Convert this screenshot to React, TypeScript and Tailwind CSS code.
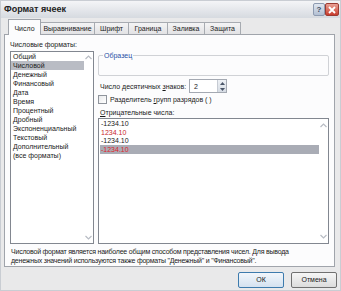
import React from "react";

const formats = [
  "Общий",
  "Числовой",
  "Денежный",
  "Финансовый",
  "Дата",
  "Время",
  "Процентный",
  "Дробный",
  "Экспоненциальный",
  "Текстовый",
  "Дополнительный",
  "(все форматы)",
];

const tabs = [
  { t: "Выравнивание", w: "w-[54px]" },
  { t: "Шрифт", w: "w-[34px]" },
  { t: "Граница", w: "w-[39px]" },
  { t: "Заливка", w: "w-[37px]" },
  { t: "Защита", w: "w-[36px]" },
];

function UpArrow() {
  return (
    <svg width="7" height="5" viewBox="0 0 7 5">
      <path d="M0.5 4 L3.5 1 L6.5 4" fill="none" stroke="#b8bcc4" strokeWidth="1.2" />
    </svg>
  );
}
function DownArrow() {
  return (
    <svg width="7" height="5" viewBox="0 0 7 5">
      <path d="M0.5 1 L3.5 4 L6.5 1" fill="none" stroke="#b8bcc4" strokeWidth="1.2" />
    </svg>
  );
}

export default function App() {
  return (
    <div
      className="w-[341px] h-[291px] overflow-hidden bg-[#c9cdd3] p-[1px] text-[7px] leading-[9px] text-[#1a1a1a]"
      style={{ fontFamily: '"Liberation Sans", Arial, sans-serif' }}
    >
      <div className="flex h-full w-full flex-col bg-[#e9e9ea]">
        {/* Title bar */}
        <div className="flex h-[17px] shrink-0 items-center justify-between bg-gradient-to-b from-[#f4f5f7] to-[#d6dae0] pl-[3px] pr-[1px]">
          <span className="text-[9px] font-bold text-[#222]">Формат ячеек</span>
          <div className="flex items-center">
            <div className="flex h-[13px] w-[12px] items-center justify-center rounded-[2px] border border-[#8e9bb0] bg-gradient-to-b from-[#dfe6f0] to-[#b3c0d3] text-[8px] font-bold text-[#3c4a63]">
              ?
            </div>
            <div className="flex h-[13px] w-[14px] items-center justify-center rounded-[2px] border border-[#9b3b33] bg-gradient-to-b from-[#e8a095] to-[#c8392c]">
              <svg width="8" height="8" viewBox="0 0 8 8">
                <path d="M1 1 L7 7 M7 1 L1 7" stroke="white" strokeWidth="1.8" />
              </svg>
            </div>
          </div>
        </div>

        {/* Body */}
        <div className="flex flex-1 flex-col pl-[3px] pr-[5px]">
          {/* Tabs */}
          <div className="flex h-[16px] shrink-0 items-end pl-[4px]">
            <div className="relative z-10 -mb-[1px] flex h-[16px] w-[33px] items-center justify-center border border-b-0 border-[#a0a4ab] bg-[#fcfcfd] pt-[1px]">
              Число
            </div>
            {tabs.map(({ t, w }) => (
              <div
                key={t}
                className={
                  "flex h-[12px] items-center justify-center border border-b-0 border-l-0 border-[#a7abb1] bg-gradient-to-b from-[#f4f4f5] to-[#e2e2e4] " +
                  w
                }
              >
                {t}
              </div>
            ))}
          </div>

          {/* Panel */}
          <div className="flex h-[233px] shrink-0 flex-col border border-[#a0a4ab] bg-[#fcfcfd] px-[5px] pt-[5px]">
            <div className="flex shrink-0 gap-[4px]">
              {/* Left list */}
              <div className="flex w-[84px] flex-col">
                <div className="mb-[2px] h-[9px] whitespace-nowrap">Числовые форматы:</div>
                <div className="flex h-[193px] border border-[#828790] bg-white">
                  <div className="flex flex-1 flex-col">
                    {formats.map((f, i) => (
                      <div
                        key={f}
                        className={
                          "h-[9px] whitespace-nowrap pl-[2px] " + (i === 1 ? "bg-[#b9bcc4]" : "")
                        }
                      >
                        {f}
                      </div>
                    ))}
                  </div>
                  <div className="flex w-[9px] flex-col items-center justify-between py-[3px]">
                    <UpArrow />
                    <DownArrow />
                  </div>
                </div>
              </div>

              {/* Right */}
              <div className="flex flex-1 flex-col">
                <div className="relative mt-[15px] h-[21px] rounded-[2px] border border-[#d0d2d6]">
                  <span className="absolute left-[4px] top-[-5px] bg-[#fcfcfd] px-[1px] text-[#1f4fa6]">
                    Образец
                  </span>
                </div>
                <div className="mt-[3px] flex h-[14px] items-center pl-[2px]">
                  <span className="w-[89px] whitespace-nowrap">
                    Число десятичных <span className="underline">з</span>наков:
                  </span>
                  <div className="flex h-[14px] w-[38px] items-center border border-[#a4a9b2] bg-white pl-[4px]">
                    <span className="flex-1">2</span>
                    <div className="flex h-full w-[9px] flex-col border-l border-[#c6cbd3] bg-gradient-to-b from-[#eef1f5] to-[#d6dce4]">
                      <div className="flex flex-1 items-center justify-center">
                        <svg width="5" height="3" viewBox="0 0 5 3"><path d="M0 3 L2.5 0 L5 3Z" fill="#4a5568" /></svg>
                      </div>
                      <div className="flex flex-1 items-center justify-center">
                        <svg width="5" height="3" viewBox="0 0 5 3"><path d="M0 0 L2.5 3 L5 0Z" fill="#4a5568" /></svg>
                      </div>
                    </div>
                  </div>
                </div>
                <div className="mt-[2px] flex h-[9px] items-center">
                  <div className="mr-[3px] h-[9px] w-[9px] border border-[#8f949c] bg-gradient-to-br from-[#e8e9eb] to-white" />
                  <span className="whitespace-nowrap">
                    Разделитель <span className="underline">г</span>рупп разрядов ( )
                  </span>
                </div>
                <div className="mt-[4px] h-[9px] pl-[2px]">
                  <span className="underline">О</span>трицательные числа:
                </div>
                <div className="mt-[1px] flex h-[126px] border border-[#828790] bg-white">
                  <div className="flex flex-1 flex-col pl-[1px]">
                    <div className="h-[8.5px] pl-[1px]">-1234.10</div>
                    <div className="h-[8.5px] pl-[1px] text-[#c8262c]">1234.10</div>
                    <div className="h-[8.5px] pl-[1px]">-1234.10</div>
                    <div className="h-[9px] bg-[#a9acb5] pl-[1px] text-[#e0242b]">-1234.10</div>
                  </div>
                  <div className="flex w-[9px] flex-col items-center justify-between py-[4px]">
                    <UpArrow />
                    <DownArrow />
                  </div>
                </div>
              </div>
            </div>
            <div className="mt-[3px] pl-[1px] leading-[9px] tracking-[-0.22px] whitespace-nowrap">
              Числовой формат является наиболее общим способом представления чисел. Для вывода
              <br />
              денежных значений используются также форматы "Денежный" и "Финансовый".
            </div>
          </div>

          {/* Footer */}
          <div className="-mr-[2px] flex flex-1 items-center justify-end gap-[7px] pt-[2px]">
            <button className="flex h-[16px] w-[46px] items-center justify-center rounded-[2px] border border-[#3d7bad] bg-gradient-to-b from-[#f2f6fb] to-[#d4e2f0] text-[7px]">
              ОК
            </button>
            <button className="flex h-[16px] w-[46px] items-center justify-center rounded-[2px] border border-[#707070] bg-gradient-to-b from-[#f6f6f6] to-[#dcdcdc] text-[7px]">
              Отмена
            </button>
          </div>
        </div>
      </div>
    </div>
  );
}
